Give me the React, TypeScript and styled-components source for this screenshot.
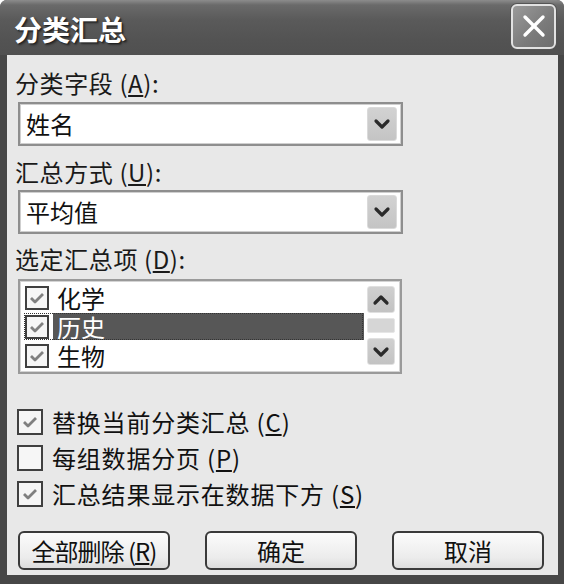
import React from "react";
import styled, { createGlobalStyle } from "styled-components";

const Global = createGlobalStyle`
  html, body { margin: 0; padding: 0; background: #ffffff; }
  body { font-family: "Noto Sans CJK SC", "Noto Sans", sans-serif; }
  * { box-sizing: border-box; }
`;

const Frame = styled.div`
  width: 564px;
  height: 584px;
  background: #474747;
  border-radius: 7px 7px 0 0;
  display: flex;
  flex-direction: column;
  overflow: hidden;
`;

const TitleBar = styled.div`
  height: 55px;
  flex: none;
  display: flex;
  align-items: center;
  justify-content: space-between;
  padding: 0 8px 0 14px;
  background: linear-gradient(#8c8c8c 0px, #6a6a6a 5px, #5a5a5a 20px, #535353 40px, #505050 55px);
`;

const Title = styled.div`
  color: #ffffff;
  font-size: 28px;
  font-weight: 700;
  text-shadow: 1px 1px 1px #222, 2px 2px 2px #333;
  line-height: 34px;
  margin-top: 2px;
`;

const CloseButton = styled.div`
  width: 45px;
  height: 45px;
  border: 2px solid #e2e2e2;
  border-radius: 6px;
  background: linear-gradient(135deg, #9a9a9a, #7a7a7a 60%, #6e6e6e);
  box-shadow: 0 0 0 1px #555;
  display: flex;
  align-items: center;
  justify-content: center;
  margin-top: -3px;
`;

const Client = styled.div`
  flex: 1;
  margin: 0 6px 9px 7px;
  background: #e8e8e8;
  padding: 14px 0 0 11px;
  display: flex;
  flex-direction: column;
  color: #111;
`;

const Label = styled.div<{ $top: number }>`
  font-size: 24px;
  line-height: 28px;
  height: 28px;
  margin-top: ${(p) => p.$top}px;
  margin-left: -3px;
  letter-spacing: 0.6px;
  color: #1a1a1a;
  white-space: nowrap;
  u { text-decoration: underline; text-underline-offset: 2px; }
`;

const Combo = styled.div<{ $top: number }>`
  width: 385px;
  height: 44px;
  margin-top: ${(p) => p.$top}px;
  background: #ffffff;
  border: 2px solid #8e8e8e;
  box-shadow: inset 0 0 0 1px #cfcfcf;
  display: flex;
  align-items: center;
  justify-content: space-between;
  padding: 0 4px 0 6px;
`;

const ComboText = styled.span`
  font-size: 24px;
  line-height: 30px;
  color: #111;
`;

const DropButton = styled.div`
  width: 30px;
  height: 34px;
  border-radius: 3px;
  background: linear-gradient(#d2d2d2, #c4c4c4);
  border: 1px solid #dadada;
  display: flex;
  align-items: center;
  justify-content: center;
`;

const ListBox = styled.div`
  width: 384px;
  height: 95px;
  margin-top: 6px;
  background: #ffffff;
  border: 2px solid #9a9a9a;
  box-shadow: inset 0 0 0 1px #d4d4d4;
  display: flex;
  padding: 2px 5px 2px 3px;
`;

const ListItems = styled.div`
  flex: 1;
  display: flex;
  flex-direction: column;
`;

const ListRow = styled.div<{ $focus?: boolean }>`
  height: 29px;
  width: 341px;
  display: flex;
  align-items: center;
  padding-left: 2px;
  outline: ${(p) => (p.$focus ? "1px dotted #333" : "none")};
  outline-offset: -2px;
`;

const ItemText = styled.span<{ $selected?: boolean }>`
  flex: ${(p) => (p.$selected ? 1 : "none")};
  height: 27px;
  margin-left: 4px;
  padding-left: 4px;
  font-size: 24px;
  line-height: 27px;
  color: ${(p) => (p.$selected ? "#ffffff" : "#111")};
  background: ${(p) => (p.$selected ? "#575757" : "transparent")};
`;

const Box = styled.div<{ $size: number }>`
  width: ${(p) => p.$size}px;
  height: ${(p) => p.$size}px;
  flex: none;
  border: 2px solid #404040;
  background: #f6f6f6;
  display: flex;
  align-items: center;
  justify-content: center;
`;

const ScrollBar = styled.div`
  width: 29px;
  display: flex;
  flex-direction: column;
  align-items: center;
  padding-top: 3px;
`;

const ScrollBtn = styled.div`
  width: 28px;
  height: 27px;
  border-radius: 3px;
  background: linear-gradient(#d0d0d0, #c3c3c3);
  border: 1px solid #e0e0e0;
  display: flex;
  align-items: center;
  justify-content: center;
`;

const Thumb = styled.div`
  width: 28px;
  height: 15px;
  margin: 5px 0;
  border-radius: 2px;
  background: #d6d6d6;
  border: 1px solid #e6e6e6;
`;

const Options = styled.div`
  margin-top: 34px;
  margin-left: -1px;
  display: flex;
  flex-direction: column;
  gap: 9px;
`;

const OptionRow = styled.div`
  display: flex;
  align-items: center;
  height: 27px;
  gap: 9px;
  font-size: 24px;
  line-height: 27px;
  letter-spacing: 0.8px;
  color: #111;
  white-space: nowrap;
  u { text-decoration: underline; text-underline-offset: 2px; }
`;

const Buttons = styled.div`
  margin-top: 24px;
  display: flex;
  gap: 35px;
`;

const Button = styled.div<{ $tight?: boolean }>`
  width: 152px;
  height: 39px;
  border: 2px solid #3a3a3a;
  border-radius: 6px;
  background: linear-gradient(#fbfbfb, #ececec 70%, #dcdcdc);
  display: flex;
  align-items: center;
  justify-content: center;
  font-size: 24px;
  line-height: 30px;
  color: #111;
  letter-spacing: ${(p) => (p.$tight ? "-1px" : "0")};
  white-space: nowrap;
  u { text-decoration: underline; text-underline-offset: 2px; }
`;

const Chevron = ({ up = false }: { up?: boolean }) => (
  <svg width="18" height="12" viewBox="0 0 18 12">
    <polyline
      points={up ? "3,9 9,3 15,9" : "3,3 9,9 15,3"}
      fill="none"
      stroke="#2a2a2a"
      strokeWidth="3.2"
      strokeLinecap="round"
      strokeLinejoin="round"
    />
  </svg>
);

const Check = () => (
  <svg width="16" height="14" viewBox="0 0 16 14">
    <polyline
      points="2,7 6,11 14,3"
      fill="none"
      stroke="#808080"
      strokeWidth="2.8"
      strokeLinejoin="round"
    />
  </svg>
);

const CloseX = () => (
  <svg width="26" height="26" viewBox="0 0 26 26">
    <line x1="4" y1="4" x2="22" y2="22" stroke="#fff" strokeWidth="3.4" strokeLinecap="round" />
    <line x1="22" y1="4" x2="4" y2="22" stroke="#fff" strokeWidth="3.4" strokeLinecap="round" />
  </svg>
);

export default function App() {
  return (
    <>
      <Global />
      <Frame>
        <TitleBar>
          <Title>分类汇总</Title>
          <CloseButton>
            <CloseX />
          </CloseButton>
        </TitleBar>
        <Client>
          <Label $top={0}>
            分类字段 (<u>A</u>):
          </Label>
          <Combo $top={5}>
            <ComboText>姓名</ComboText>
            <DropButton>
              <Chevron />
            </DropButton>
          </Combo>
          <Label $top={12}>
            汇总方式 (<u>U</u>):
          </Label>
          <Combo $top={4}>
            <ComboText>平均值</ComboText>
            <DropButton>
              <Chevron />
            </DropButton>
          </Combo>
          <Label $top={11}>
            选定汇总项 (<u>D</u>):
          </Label>
          <ListBox>
            <ListItems>
              <ListRow>
                <Box $size={24}>
                  <Check />
                </Box>
                <ItemText>化学</ItemText>
              </ListRow>
              <ListRow $focus>
                <Box $size={24}>
                  <Check />
                </Box>
                <ItemText $selected>历史</ItemText>
              </ListRow>
              <ListRow>
                <Box $size={24}>
                  <Check />
                </Box>
                <ItemText>生物</ItemText>
              </ListRow>
            </ListItems>
            <ScrollBar>
              <ScrollBtn>
                <Chevron up />
              </ScrollBtn>
              <Thumb />
              <ScrollBtn>
                <Chevron />
              </ScrollBtn>
            </ScrollBar>
          </ListBox>
          <Options>
            <OptionRow>
              <Box $size={26}>
                <Check />
              </Box>
              <span>
                替换当前分类汇总 (<u>C</u>)
              </span>
            </OptionRow>
            <OptionRow>
              <Box $size={26} />
              <span>
                每组数据分页 (<u>P</u>)
              </span>
            </OptionRow>
            <OptionRow>
              <Box $size={26}>
                <Check />
              </Box>
              <span>
                汇总结果显示在数据下方 (<u>S</u>)
              </span>
            </OptionRow>
          </Options>
          <Buttons>
            <Button $tight>
              全部删除 (<u>R</u>)
            </Button>
            <Button>确定</Button>
            <Button>取消</Button>
          </Buttons>
        </Client>
      </Frame>
    </>
  );
}
